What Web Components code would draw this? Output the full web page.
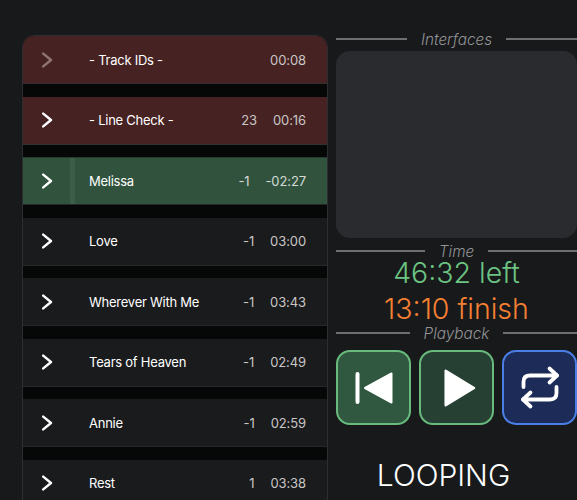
<!DOCTYPE html>
<html>
<head>
<meta charset="utf-8">
<style>
    html, body { margin: 0; height: 500px; overflow: hidden; background: #18191b; }
    body { font-family: Inter, "Liberation Sans", sans-serif; color: #fff; }
    #app { display: grid; grid-template-columns: 306px 241px; column-gap: 8px; padding: 35px 0 0 22px; width: 577px; height: 500px; overflow: hidden; box-sizing: border-box; }
</style>
</head>
<body>
<div id="app">
    <track-list>
        <track-row kind="cue" dim name="- Track IDs -" time="00:08"></track-row>
        <track-row kind="cue" name="- Line Check -" count="23" time="00:16"></track-row>
        <track-row kind="active" name="Melissa" count="-1" time="-02:27"></track-row>
        <track-row name="Love" count="-1" time="03:00"></track-row>
        <track-row name="Wherever With Me" count="-1" time="03:43"></track-row>
        <track-row name="Tears of Heaven" count="-1" time="02:49"></track-row>
        <track-row name="Annie" count="-1" time="02:59"></track-row>
        <track-row name="Rest" count="1" time="03:38"></track-row>
    </track-list>
    <side-panel></side-panel>
</div>

<script>
class TrackList extends HTMLElement {
    connectedCallback() {
        const shadow = this.attachShadow({mode: "open"})
        shadow.innerHTML = `
            <style>
                :host {
                    display: flex;
                    flex-direction: column;
                    gap: 12.5px;
                    height: 520px;
                    overflow: hidden;
                    box-sizing: border-box;
                    background: #060808;
                    border: 1px solid #2c2e32;
                    border-radius: 12px;
                }
            </style>
            <slot></slot>
        `
    }
}
customElements.define("track-list", TrackList)

class TrackRow extends HTMLElement {
    connectedCallback() {
        const count = this.getAttribute("count") || ""
        const shadow = this.attachShadow({mode: "open"})
        shadow.innerHTML = `
            <style>
                :host {
                    display: flex;
                    align-items: center;
                    flex: none;
                    height: 48px;
                    padding-right: 21px;
                    box-sizing: border-box;
                    background: #1a1b1d;
                    border-bottom: 1px solid #26282b;
                    font-size: 13px;
                    letter-spacing: -0.25px;
                    color: #fff;
                }
                :host([kind=cue]) { background: #472222; border-bottom-color: #33302f; }
                :host([kind=active]) { background: #31533e; border-top: 1px solid #2a3a30; }
                .arrow { display: flex; justify-content: center; width: 47px; }
                svg { width: 12px; height: 16px; fill: none; stroke: #fff; stroke-width: 2.4; stroke-linecap: round; stroke-linejoin: round; }
                :host([dim]) svg { stroke: #8f7473; }
                .bar { align-self: stretch; width: 5px; margin-right: 14px; }
                :host([kind=active]) .bar { background: #3c5e49; }
                .name { flex: 1; }
                .numbers { display: flex; gap: 16px; letter-spacing: -0.1px; color: #c9c6c5; }
                :host([kind=active]) .numbers { color: #d3dbd5; }
            </style>
            <div class="arrow"><svg viewBox="0 0 12 16"><path d="M2.2 1.6 L10 8 L2.2 14.4"/></svg></div>
            <div class="bar"></div>
            <div class="name">${this.getAttribute("name")}</div>
            <div class="numbers">
                ${count ? `<span>${count}</span>` : ""}
                <span>${this.getAttribute("time")}</span>
            </div>
        `
    }
}
customElements.define("track-row", TrackRow)

class SectionTitle extends HTMLElement {
    connectedCallback() {
        const shadow = this.attachShadow({mode: "open"})
        shadow.innerHTML = `
            <style>
                :host {
                    display: flex;
                    align-items: center;
                    gap: 14px;
                    height: 16px;
                    font-size: 15.3px;
                    font-style: italic;
                    font-weight: 300;
                    color: #929395;
                }
                i { flex: 1; height: 2px; background: #6e6f71; }
            </style>
            <i></i><slot></slot><i></i>
        `
    }
}
customElements.define("section-title", SectionTitle)

class ControlButton extends HTMLElement {
    connectedCallback() {
        const shadow = this.attachShadow({mode: "open"})
        shadow.innerHTML = `
            <style>
                :host {
                    display: flex;
                    align-items: center;
                    justify-content: center;
                    width: 75px;
                    height: 75px;
                    box-sizing: border-box;
                    border: 2.5px solid #68bb7d;
                    border-radius: 14px;
                    background: #264034;
                }
                :host([tone=mid]) { background: #30573f; }
                :host([tone=blue]) { border-color: #4a7fe8; background: #1c2b57; }
                ::slotted(svg) { width: 50px; height: 50px; }
            </style>
            <slot></slot>
        `
    }
}
customElements.define("control-button", ControlButton)

class SidePanel extends HTMLElement {
    connectedCallback() {
        const shadow = this.attachShadow({mode: "open"})
        shadow.innerHTML = `
            <style>
                :host { display: flex; flex-direction: column; }
                .first { margin-top: -4px; }
                .screen { height: 187px; margin-top: 4px; margin-bottom: 5px; background: #2a2b2e; border-radius: 14px; }
                .clock { text-align: center; font-size: 28.5px; font-weight: 300; line-height: 28px; }
                .left { color: #6cc482; }
                .finish { color: #f58033; margin-top: 8px; margin-bottom: 2px; }
                .buttons { display: flex; gap: 8px; margin-top: 9px; }
                .status { font-size: 30px; font-weight: 300; text-align: center; margin: 32px 26px 0 0; line-height: 36px; }
                svg { display: block; }
            </style>
            <section-title class="first">Interfaces</section-title>
            <div class="screen"></div>
            <section-title>Time</section-title>
            <div class="clock left">46:32 left</div>
            <div class="clock finish">13:10 finish</div>
            <section-title>Playback</section-title>
            <div class="buttons">
                <control-button tone="mid">
                    <svg viewBox="0 0 50 50" fill="#fff" stroke="#fff" stroke-linejoin="round" stroke-linecap="round">
                        <path d="M8.5 11 V39" stroke-width="4" fill="none"/>
                        <path d="M42.5 10.5 V39.5 L16 25 Z" stroke-width="2"/>
                    </svg>
                </control-button>
                <control-button>
                    <svg viewBox="0 0 50 50" fill="#fff" stroke="#fff" stroke-linejoin="round">
                        <path d="M13.7 7.7 V42.3 L42 25 Z" stroke-width="2.5"/>
                    </svg>
                </control-button>
                <control-button tone="blue">
                    <svg viewBox="0 0 50 50" fill="none" stroke="#fff" stroke-width="3.8" stroke-linejoin="round" stroke-linecap="round">
                        <path d="M34.5 5.5 L42 12.5 L34.5 19.5"/>
                        <path d="M8.5 24 V19 Q8.5 12.5 15 12.5 H42"/>
                        <path d="M41.5 24 V30 Q41.5 36.5 35 36.5 H8"/>
                        <path d="M15.5 29.5 L8 36.5 L15.5 43.5"/>
                    </svg>
                </control-button>
            </div>
            <div class="status">LOOPING</div>
        `
    }
}
customElements.define("side-panel", SidePanel)
</script>
</body>
</html>
